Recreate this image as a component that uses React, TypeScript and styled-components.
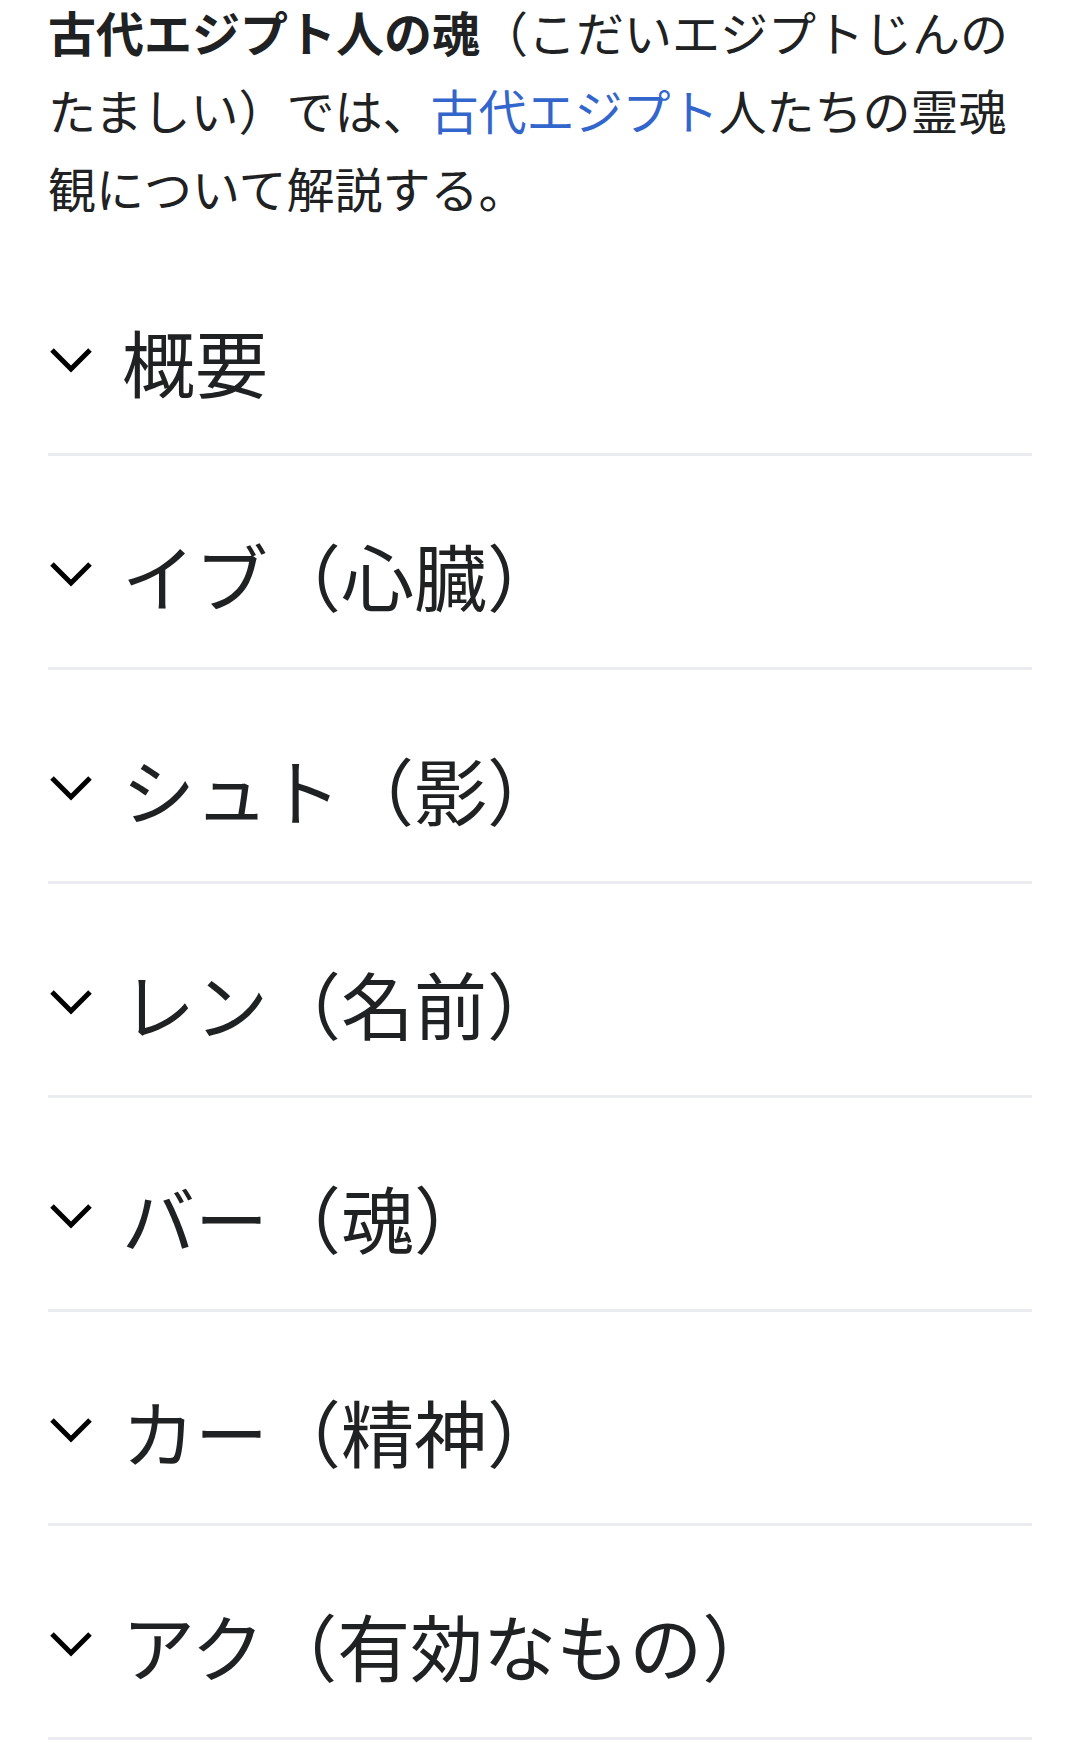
import styled, { createGlobalStyle } from 'styled-components';

const GlobalStyle = createGlobalStyle`
  html, body {
    margin: 0;
    padding: 0;
    background: #ffffff;
  }
  body {
    font-family: "Noto Sans CJK JP", "Noto Sans", sans-serif;
    color: #202122;
  }
`;

const Page = styled.main`
  padding: 0 48px;
`;

const Lead = styled.p`
  margin: -8px 0 0;
  font-size: 48px;
  line-height: 78px;
  color: #202122;
`;

const Link = styled.a`
  color: #3366cc;
  text-decoration: none;
`;

const Section = styled.section<{ $first?: boolean }>`
  margin-top: ${(p) => (p.$first ? '16px' : '0')};
  border-bottom: 3px solid #eaecf0;
`;

const SectionHeading = styled.h2`
  display: flex;
  align-items: center;
  gap: 28px;
  margin: 0;
  padding: 67px 0 42px;
  font-size: 73px;
  font-weight: 400;
  line-height: 102px;
  color: #202122;
`;

const Chevron = styled.svg`
  flex: none;
  width: 46px;
  height: 46px;
`;

const ChevronIcon = () => (
  <Chevron viewBox="0 0 46 46" fill="none">
    <path d="M4 13 L23 32 L42 13" stroke="#000" strokeWidth="5" />
  </Chevron>
);

const sections = [
  '概要',
  'イブ（心臓）',
  'シュト（影）',
  'レン（名前）',
  'バー（魂）',
  'カー（精神）',
  'アク（有効なもの）',
];

export default function App() {
  return (
    <>
      <GlobalStyle />
      <Page>
        <Lead>
          <b>古代エジプト人の魂</b>（こだいエジプトじんのたましい）では、
          <Link href="#">古代エジプト</Link>人たちの霊魂観について解説する。
        </Lead>
        {sections.map((title, i) => (
          <Section key={title} $first={i === 0}>
            <SectionHeading>
              <ChevronIcon />
              {title}
            </SectionHeading>
          </Section>
        ))}
      </Page>
    </>
  );
}
